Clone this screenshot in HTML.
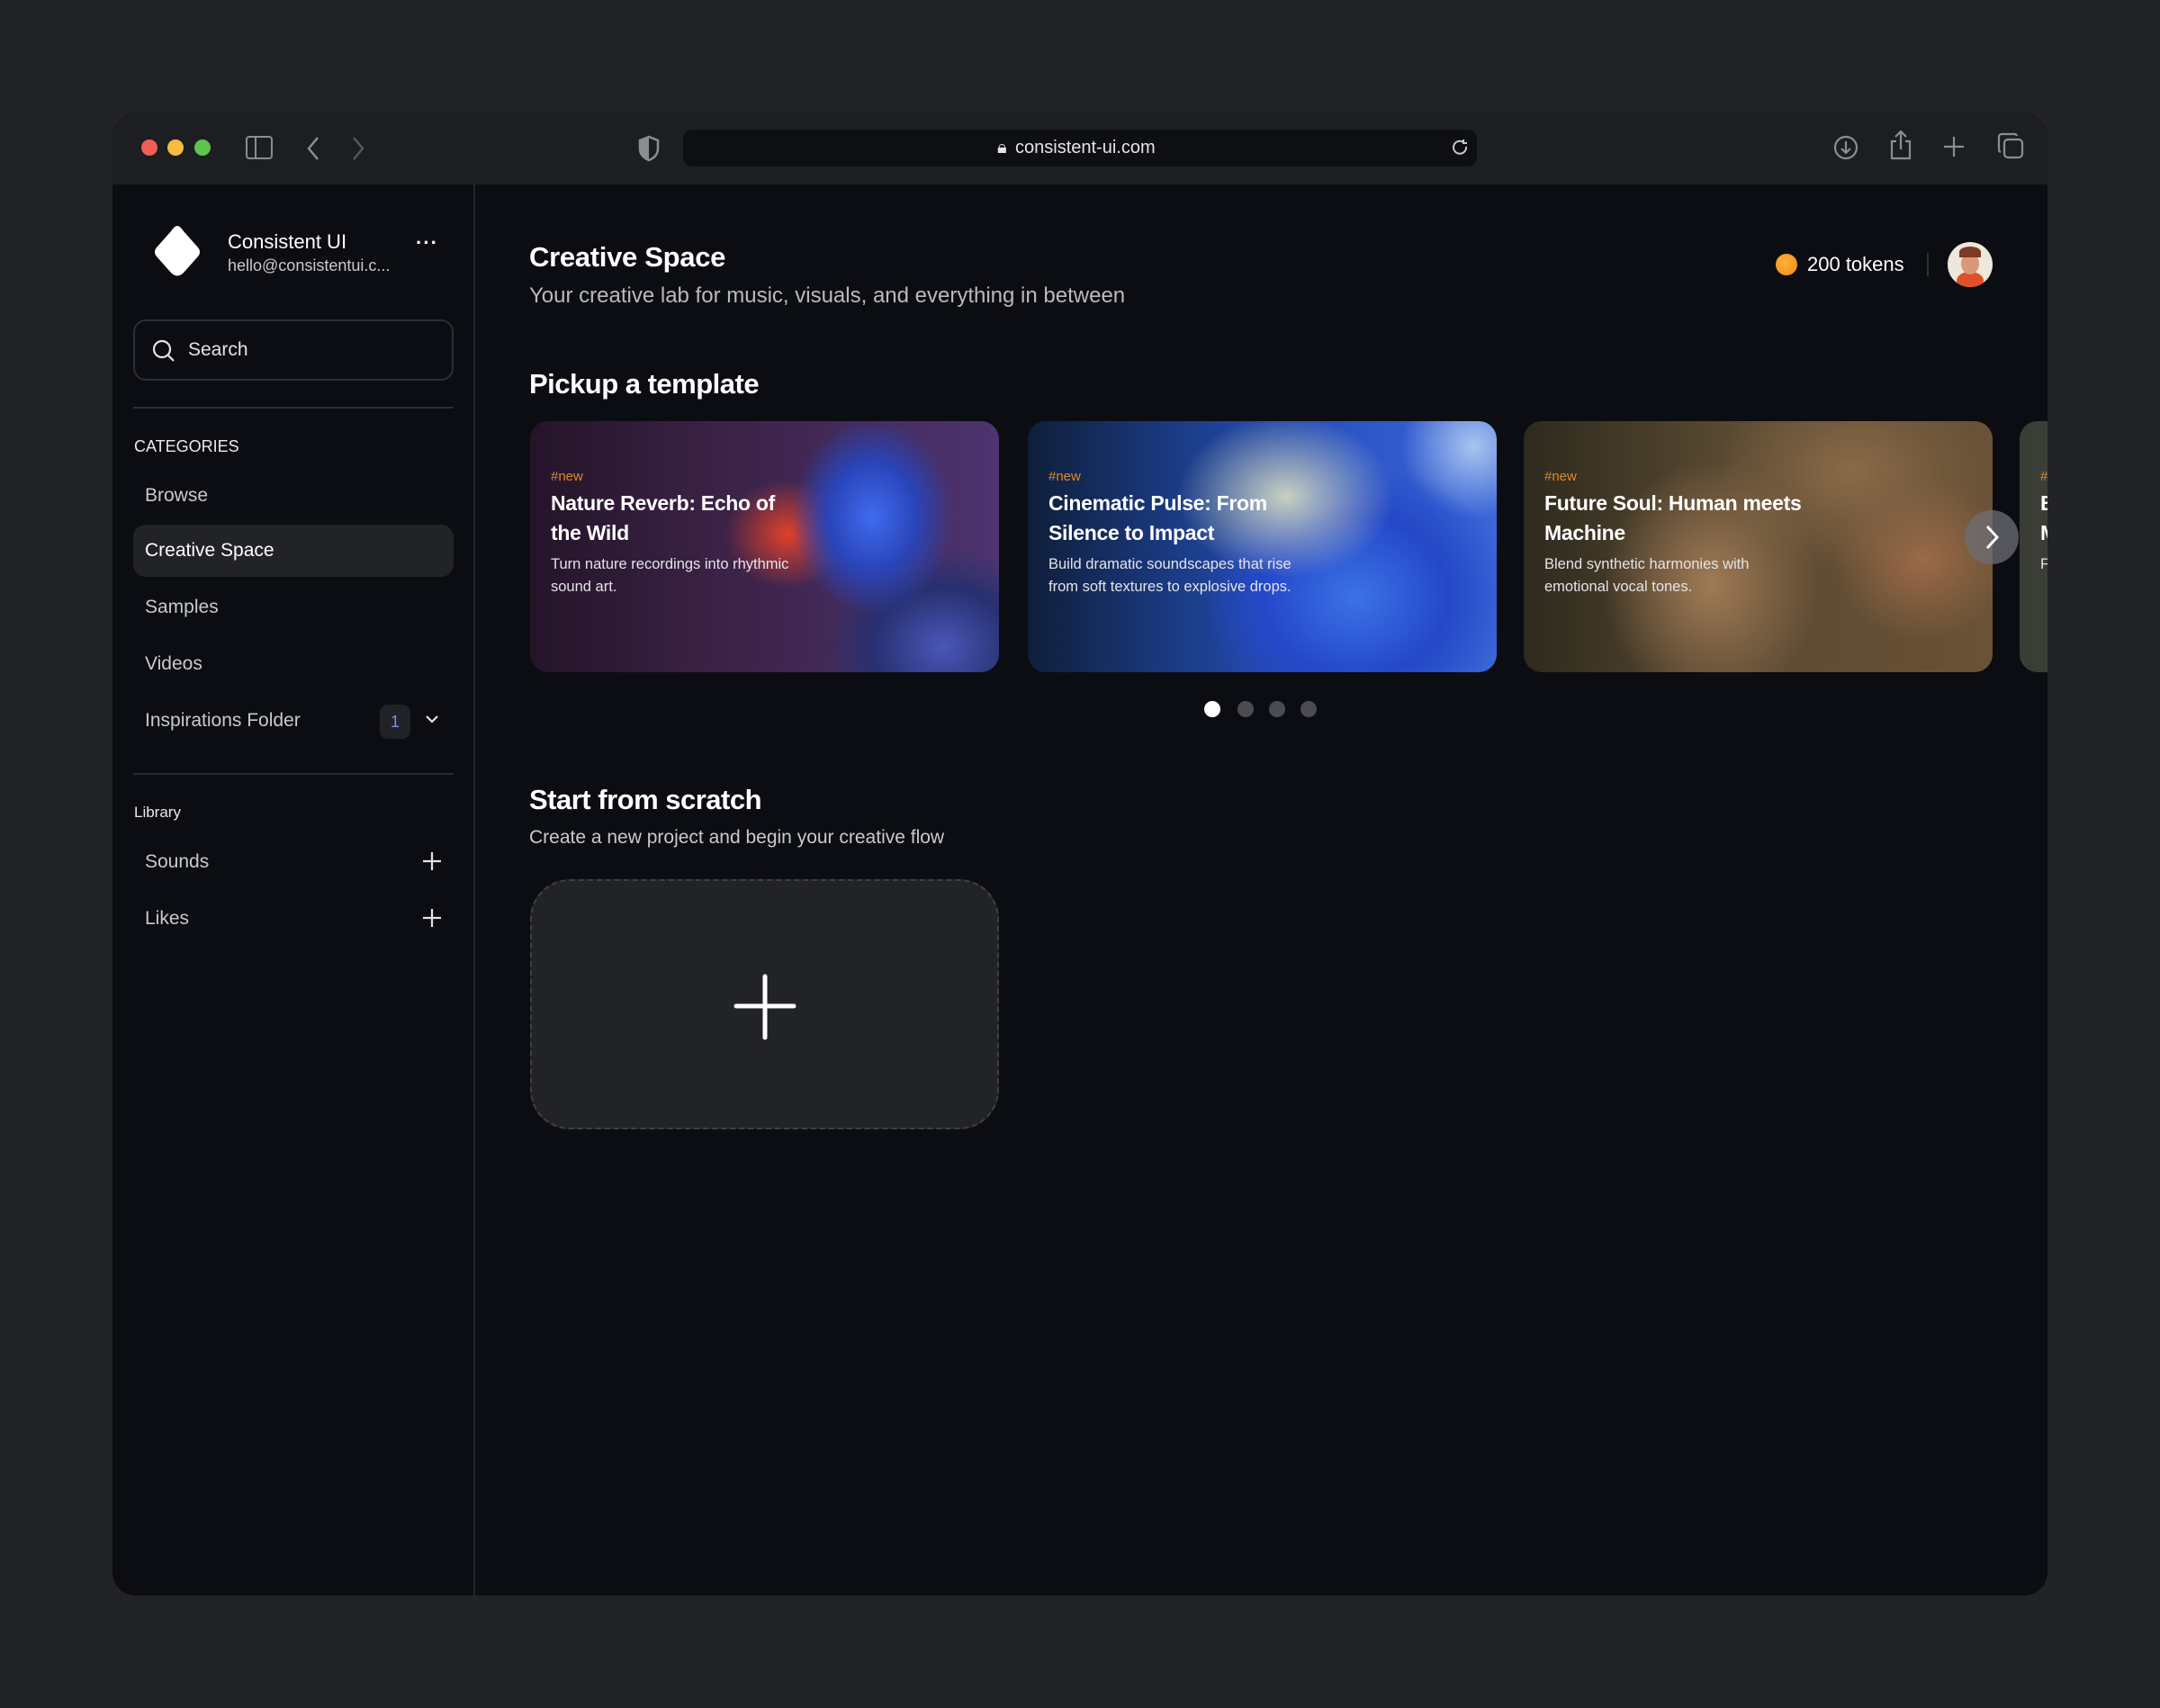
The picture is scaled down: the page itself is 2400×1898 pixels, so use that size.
<!DOCTYPE html>
<html><head><meta charset="utf-8"><style>
*{margin:0;padding:0;box-sizing:border-box}
body{width:2400px;height:1898px;background:#222326;font-family:"Liberation Sans",sans-serif;position:relative;overflow:hidden;color:#fff}
.win{position:absolute;left:125px;top:125px;width:2150px;height:1648px;border-radius:26px;overflow:hidden;background:#0c0d12}
.tb{position:absolute;left:0;top:0;width:100%;height:80px;background:#1c1e22}
.dot{position:absolute;top:30px;width:18px;height:18px;border-radius:50%}
.abs{position:absolute}
.side{position:absolute;left:0;top:80px;width:403px;bottom:0;border-right:2px solid #24262b;background:#0c0d12}
.nav{position:absolute;left:36px;font-size:21px;color:#c9cacd}
.t{position:absolute;white-space:nowrap}
.card{position:absolute;top:343px;width:521px;height:279px;border-radius:20px;overflow:hidden}
.card .tag{position:absolute;left:23px;top:53px;font-size:15px;color:#e0892a}
.card .h{position:absolute;left:23px;top:75px;font-size:23px;font-weight:bold;line-height:33px;white-space:nowrap;letter-spacing:-0.3px}
.card .d{position:absolute;left:23px;top:147px;font-size:16.5px;line-height:25px;color:#e4e4e8;white-space:nowrap}
.pd{position:absolute;top:654px;width:18px;height:18px;border-radius:50%;background:#4a4c52}
</style></head><body>
<div class="win">
<div class="tb">
<div class="dot" style="left:32px;background:#ee5f57"></div>
<div class="dot" style="left:61px;background:#f4bd3d"></div>
<div class="dot" style="left:91px;background:#5fc44c"></div>
<svg class="abs" style="left:148px;top:26px" width="30" height="28" viewBox="0 0 30 28" fill="none" stroke="#8b8d92" stroke-width="2"><rect x="1" y="1" width="28" height="24" rx="3"/><line x1="11" y1="1" x2="11" y2="25"/></svg>
<svg class="abs" style="left:215px;top:26px" width="16" height="28" viewBox="0 0 16 28" fill="none" stroke="#8b8d92" stroke-width="2.5"><path d="M13 2L3 14l10 12"/></svg>
<svg class="abs" style="left:265px;top:26px" width="16" height="28" viewBox="0 0 16 28" fill="none" stroke="#55575c" stroke-width="2.5"><path d="M3 2l10 12L3 26"/></svg>
<svg class="abs" style="left:584px;top:25px" width="24" height="30" viewBox="0 0 24 30"><path d="M12 2L2 6v9c0 7 5 11 10 13 5-2 10-6 10-13V6z" fill="none" stroke="#8b8d92" stroke-width="2.5"/><path d="M12 2v26c-5-2-10-6-10-13V6z" fill="#8b8d92"/></svg>
<div class="abs" style="left:634px;top:19px;width:882px;height:41px;border-radius:10px;background:#0e0f13"></div>
<div class="t" style="left:983px;top:28px;font-size:20px;color:#e4e4e6">🔒︎</div>
<div class="t" style="left:1003px;top:28px;font-size:20px;color:#e4e4e6">consistent-ui.com</div>
<svg class="abs" style="left:1488px;top:29px" width="20" height="22" viewBox="0 0 20 22" fill="none" stroke="#c8c9cc" stroke-width="2"><path d="M16 9a7 7 0 1 1-3-5"/><path d="M13 1v4h4"/></svg>
<svg class="abs" style="left:1911px;top:24px" width="30" height="30" viewBox="0 0 30 30" fill="none" stroke="#8b8d92" stroke-width="2.2"><circle cx="15" cy="15" r="12"/><path d="M15 8v13M10 16l5 5 5-5"/></svg>
<svg class="abs" style="left:1974px;top:19px" width="26" height="34" viewBox="0 0 26 34" fill="none" stroke="#8b8d92" stroke-width="2.2"><path d="M8 13H3v19h20V13h-5M13 22V2M7 8l6-6 6 6"/></svg>
<svg class="abs" style="left:2034px;top:26px" width="24" height="24" viewBox="0 0 24 24" fill="none" stroke="#8b8d92" stroke-width="2.2"><path d="M12 1v22M1 12h22"/></svg>
<svg class="abs" style="left:2094px;top:22px" width="30" height="30" viewBox="0 0 30 30" fill="none" stroke="#8b8d92" stroke-width="2.2"><rect x="8" y="8" width="20" height="20" rx="4"/><path d="M22 4a3 3 0 0 0-3-2H5a3 3 0 0 0-3 3v14a3 3 0 0 0 2 3"/></svg>
</div>
<div class="side">
<svg class="abs" style="left:39px;top:42px" width="66" height="66" viewBox="0 0 66 66"><path d="M33 4Q36 4 40 10L56 28Q60 33 56 38L40 56Q33 63 26 56L10 38Q6 33 10 28L26 10Q30 4 33 4z" fill="#fff"/></svg>
<div class="t" style="left:128px;top:51px;font-size:22px;color:#fff">Consistent UI</div>
<div class="t" style="left:128px;top:80px;font-size:18px;color:#c9cacd">hello@consistentui.c...</div>
<div class="t" style="left:337px;top:52px;font-size:22px;color:#fff;letter-spacing:1px;font-weight:bold">···</div>
<div class="abs" style="left:23px;top:150px;width:356px;height:68px;border:2px solid #2c2e33;border-radius:14px"></div>
<svg class="abs" style="left:43px;top:171px" width="28" height="28" viewBox="0 0 28 28" fill="none" stroke="#e4e4e6" stroke-width="2.2"><circle cx="12" cy="12" r="9"/><path d="M19 19l6 6"/></svg>
<div class="t" style="left:84px;top:172px;font-size:21px;color:#e4e4e6">Search</div>
<div class="abs" style="left:23px;top:247px;width:356px;height:2px;background:#2a2c31"></div>
<div class="t" style="left:24px;top:281px;font-size:18px;color:#e9e9ec">CATEGORIES</div>
<div class="nav t" style="top:334px">Browse</div>
<div class="abs" style="left:23px;top:378px;width:356px;height:58px;border-radius:14px;background:#222327"></div>
<div class="nav t" style="top:395px;color:#fff">Creative Space</div>
<div class="nav t" style="top:458px">Samples</div>
<div class="nav t" style="top:521px">Videos</div>
<div class="nav t" style="top:584px">Inspirations Folder</div>
<div class="abs" style="left:297px;top:578px;width:34px;height:38px;border-radius:9px;background:#202227;color:#7b8ff0;font-size:18px;text-align:center;line-height:38px">1</div>
<svg class="abs" style="left:347px;top:588px" width="16" height="12" viewBox="0 0 16 12" fill="none" stroke="#e4e4e6" stroke-width="2.2"><path d="M2 3l6 6 6-6"/></svg>
<div class="abs" style="left:23px;top:654px;width:356px;height:2px;background:#2a2c31"></div>
<div class="t" style="left:24px;top:688px;font-size:17px;color:#e9e9ec">Library</div>
<div class="nav t" style="top:741px">Sounds</div>
<div class="nav t" style="top:804px">Likes</div>
<svg class="abs" style="left:344px;top:741px" width="22" height="22" viewBox="0 0 22 22" stroke="#e4e4e6" stroke-width="2.2"><path d="M11 1v20M1 11h20"/></svg>
<svg class="abs" style="left:344px;top:804px" width="22" height="22" viewBox="0 0 22 22" stroke="#e4e4e6" stroke-width="2.2"><path d="M11 1v20M1 11h20"/></svg>
</div>
<div class="t" style="left:463px;top:143px;font-size:31px;font-weight:bold;letter-spacing:-0.3px">Creative Space</div>
<div class="t" style="left:463px;top:190px;font-size:24px;color:#b9babe">Your creative lab for music, visuals, and everything in between</div>
<div class="abs" style="left:1848px;top:157px;width:24px;height:24px;border-radius:50%;background:radial-gradient(circle at 40% 40%,#ffb13b,#f08a12)"></div>
<div class="t" style="left:1883px;top:156px;font-size:22px">200 tokens</div>
<div class="abs" style="left:2016px;top:156px;width:2px;height:26px;background:#2e3034"></div>
<div class="abs" style="left:2039px;top:144px;width:50px;height:50px;border-radius:50%;background:#efe6dc;overflow:hidden"><div class="abs" style="left:10px;top:33px;width:30px;height:20px;border-radius:50%;background:#e0502a"></div><div class="abs" style="left:15px;top:12px;width:20px;height:24px;border-radius:50%;background:#d99877"></div><div class="abs" style="left:13px;top:5px;width:24px;height:12px;border-radius:50% 50% 0 0;background:#7a3b22"></div></div>
<div class="t" style="left:463px;top:284px;font-size:31px;font-weight:bold;letter-spacing:-0.5px">Pickup a template</div>
<div class="card" style="left:464px;background:radial-gradient(ellipse 90px 110px at 73% 38%,#3f6bf0 0%,#2a44b8 55%,transparent 100%),radial-gradient(ellipse 70px 60px at 55% 45%,#e0402a 0%,transparent 100%),radial-gradient(ellipse 130px 110px at 88% 90%,#4a57b8 0%,#273070 60%,transparent 100%),linear-gradient(90deg,#241428 0%,#3b2246 40%,#4e3470 100%)">
<div class="tag">#new</div><div class="h">Nature Reverb: Echo of<br>the Wild</div><div class="d">Turn nature recordings into rhythmic<br>sound art.</div></div>
<div class="card" style="left:1017px;background:radial-gradient(ellipse 120px 90px at 55% 30%,#c8d0c0 0%,transparent 100%),radial-gradient(ellipse 170px 150px at 70% 70%,#3c72e8 0%,#2448c8 60%,transparent 100%),radial-gradient(ellipse 80px 80px at 95% 10%,#a9c4f0 0%,transparent 100%),linear-gradient(90deg,#0f1e3a 0%,#1c3e8c 35%,#2c56c8 70%,#3a66d8 100%)">
<div class="tag">#new</div><div class="h">Cinematic Pulse: From<br>Silence to Impact</div><div class="d">Build dramatic soundscapes that rise<br>from soft textures to explosive drops.</div></div>
<div class="card" style="left:1568px;background:radial-gradient(ellipse 120px 140px at 40% 65%,#a07a55 0%,transparent 100%),radial-gradient(ellipse 150px 110px at 70% 20%,#8a6a48 0%,transparent 100%),radial-gradient(ellipse 100px 90px at 85% 55%,#9c6a48 0%,transparent 100%),linear-gradient(90deg,#2e2a1e 0%,#5a4a32 45%,#6a5236 100%)">
<div class="tag">#new</div><div class="h">Future Soul: Human meets<br>Machine</div><div class="d">Blend synthetic harmonies with<br>emotional vocal tones.</div></div>
<div class="card" style="left:2119px;background:linear-gradient(90deg,#3a3d36,#4a4a40)">
<div class="tag">#new</div><div class="h">B<br>M</div><div class="d">F</div></div>
<div class="abs" style="left:2058px;top:442px;width:60px;height:60px;border-radius:50%;background:rgba(110,110,118,.75)"></div>
<svg class="abs" style="left:2078px;top:457px" width="20" height="30" viewBox="0 0 20 30" fill="none" stroke="#fff" stroke-width="3"><path d="M5 3l11 12L5 27"/></svg>
<div class="pd" style="left:1213px;background:#fff"></div>
<div class="pd" style="left:1250px"></div>
<div class="pd" style="left:1285px"></div>
<div class="pd" style="left:1320px"></div>
<div class="t" style="left:463px;top:746px;font-size:31px;font-weight:bold;letter-spacing:-0.5px">Start from scratch</div>
<div class="t" style="left:463px;top:794px;font-size:21px;color:#c9cacd">Create a new project and begin your creative flow</div>
<div class="abs" style="left:464px;top:852px;width:521px;height:278px;border-radius:44px;background:#222326;border:2px dashed #3e4046"></div>
<svg class="abs" style="left:690px;top:957px" width="70" height="74" viewBox="0 0 70 74" stroke="#fff" stroke-width="5" stroke-linecap="round"><path d="M35 3v68M3 36h64"/></svg>
</div>
</body></html>
